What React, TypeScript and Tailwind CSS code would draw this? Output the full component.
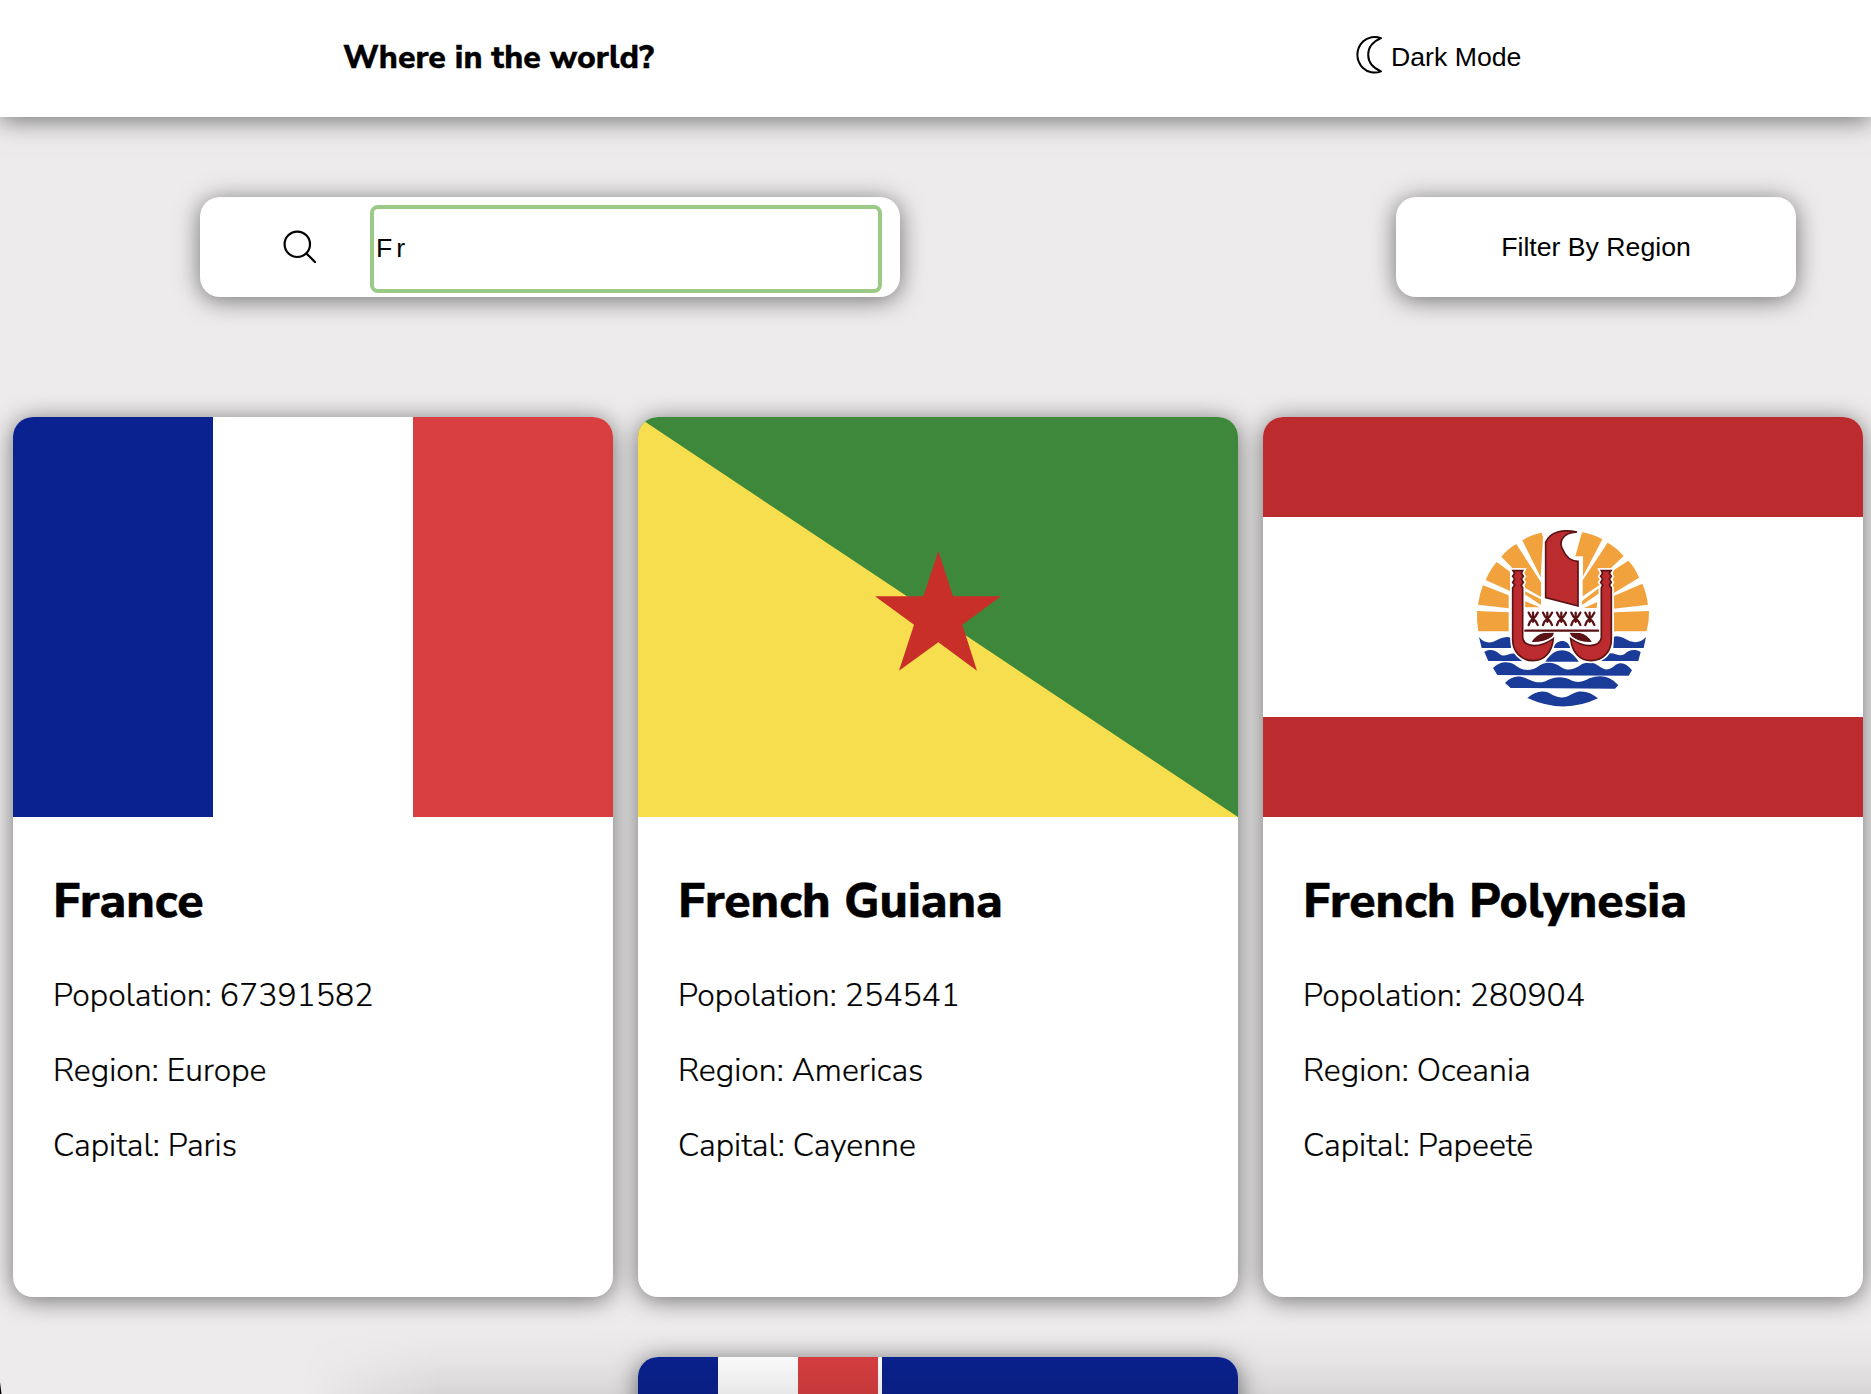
import React from "react";

const SHADOW = "shadow-[0_3px_24px_rgba(0,0,0,0.53)]";

function FranceFlag() {
  return (
    <svg viewBox="0 0 600 400" className="block h-[400px] w-[600px]">
      <rect width="200" height="400" fill="#0a2290" />
      <rect x="200" width="200" height="400" fill="#fff" />
      <rect x="400" width="200" height="400" fill="#d93f41" />
    </svg>
  );
}

function GuianaFlag() {
  return (
    <svg viewBox="0 0 600 400" className="block h-[400px] w-[600px]">
      <rect width="600" height="400" fill="#3d883a" />
      <path d="M0 0L600 400H0z" fill="#f6de4e" />
      <path
        transform="translate(222 123) scale(.33333)"
        d="M235 33L279 169H423L307 254L351 392L235 307L117 392L162 254L45 169H190z"
        fill="#c92f29"
      />
    </svg>
  );
}

const HOOK =
  "M159 167H188L184 175L190 184L184 192L190 202L184 210L188 219V368C190 384 205 391 222 392C246 392 262 384 280 371C276 410 255 437 219 437C184 437 158 410 158 374V219L164 210L158 202L164 192L158 184L164 175z";

function PolynesiaFlag() {
  return (
    <svg viewBox="0 0 600 400" className="block h-[400px] w-[600px]">
      <rect width="600" height="400" fill="#bc2c2f" />
      <rect y="100" width="600" height="200" fill="#fff" />
      <g transform="translate(197 98) scale(.33333)">
        <g fill="#f1a23c">
          <path d="M51 288L146 292V349H55Q50 320 51 288z" />
          <path d="M54 269Q58 237 69 211L146 241V280z" />
          <path d="M77 195Q90 164 110 141L150 170V228z" />
          <path d="M124 125Q144 101 169 87L243 202V246L194 218L190 160H158z" />
          <path d="M187 76Q215 58 245 53L249 67L242 187z" />
          <path d="M194 228L243 253V270L194 238zM194 258L240 277H194z" />
          <path d="M567 288L462 292V349H560Q568 320 567 288z" />
          <path d="M564 269Q559 232 547 206L461 243V281z" />
          <path d="M537 188Q526 159 505 137L458 167V236z" />
          <path d="M491 123Q470 98 443 83L368 196V244L419 210L421 160H452z" />
          <path d="M427 73Q396 56 366 52L346 124H369V184z" />
          <path d="M416 220L366 258V270L416 236zM412 261L372 279H410z" />
        </g>
        <g fill="#1b3b98">
          <path d="M57 366C70 382 85 385 100 380C120 371 134 362 153 368V399H65z" />
          <path d="M558 366C544 382 528 384 510 379C490 367 474 359 460 366V399H551z" />
          <path d="M279 399C290 371 324 371 331 399z" />
          <path d="M73 411C88 401 105 405 119 417C134 429 148 412 165 416L187 438H85z" />
          <path d="M542 411C524 401 507 405 494 417C478 428 462 410 445 416L422 438H535z" />
          <path d="M256 440C284 394 328 394 356 440z" />
          <path d="M99 459C118 440 144 436 168 452C190 467 208 470 231 457C256 437 281 440 306 458C330 471 350 459 365 448C386 439 400 441 421 456C440 470 455 461 466 450C485 439 500 447 516 466L506 482L112 480z" />
          <path d="M135 504C153 483 177 479 201 491C226 503 245 506 262 496C286 484 310 483 332 495C356 506 370 500 388 490C423 477 451 484 475 511L465 521L152 519z" />
          <path d="M202 549C226 528 254 523 278 540C302 552 318 548 338 536C365 523 391 532 414 550Q312 599 202 549z" />
        </g>
        <path d="M282 352L217 381C229 359 248 353 282 352zM329 352L395 381C384 359 362 353 329 352z" fill="#fff" stroke="#fff" strokeWidth="9" />
        <path d="M282 353L277 366Q252 382 215 381Q229 358 252 354zM329 353L336 366Q358 382 395 381Q382 358 359 354z" fill="#5a1215" />
        <path d={HOOK} fill="#fff" stroke="#fff" strokeWidth="15" />
        <path d={HOOK} fill="#bc2c2f" stroke="#5a1215" strokeWidth="5" />
        <g transform="matrix(-1 0 0 1 612 0)">
          <path d={HOOK} fill="#fff" stroke="#fff" strokeWidth="15" />
          <path d={HOOK} fill="#bc2c2f" stroke="#5a1215" strokeWidth="5" />
        </g>
        <path d="M351 51C305 54 295 82 309 105C318 127 333 138 354 139V273L257 248V82C270 50 308 42 351 51z" fill="#bc2c2f" stroke="#5a1215" strokeWidth="5" />
        <path d="M196 347H414" stroke="#5a1215" strokeWidth="7" strokeLinecap="round" />
        {[219, 262, 304, 347, 389].map((x) => (
          <path
            key={x}
            transform={`translate(${x} 311)`}
            d="M0 -18V0M-13 -18C-10 -10 -6 -4 0 0C6 -4 10 -10 14 -18M-13 19C-11 10 -7 5 0 0C7 5 11 10 14 19M-3 3L0 9L3 3"
            fill="none"
            stroke="#5a1215"
            strokeWidth="7"
            strokeLinecap="round"
            strokeLinejoin="round"
          />
        ))}
      </g>
    </svg>
  );
}

function SouthernLandsFlag() {
  return (
    <svg viewBox="0 0 600 400" className="block h-[400px] w-[600px]">
      <rect width="600" height="400" fill="#0a2290" />
      <rect x="80" width="164" height="164" fill="#fff" />
      <rect x="160" width="80" height="160" fill="#d93f41" />
    </svg>
  );
}

type CardProps = {
  flag: React.ReactNode;
  name: string;
  population: number;
  region: string;
  capital: string;
};

function Card({ flag, name, population, region, capital }: CardProps) {
  return (
    <article className={`h-[880px] w-[600px] shrink-0 overflow-hidden rounded-[20px] bg-white ${SHADOW}`}>
      {flag}
      <div className="px-10 pt-[49px] whitespace-nowrap">
        <h2 className="text-[48px] leading-[70px] font-extrabold [-webkit-text-stroke:0.4px_black]">{name}</h2>
        <div className="mt-[38px] flex flex-col gap-[31px] text-[32px] leading-[44px] font-light [-webkit-text-stroke:0.2px_black]">
          <p>Popolation: {population}</p>
          <p>Region: {region}</p>
          <p>Capital: {capital}</p>
        </div>
      </div>
    </article>
  );
}

export default function App() {
  return (
    <div className="relative h-[1394px] w-[1871px] overflow-hidden bg-[#edebec] font-['Nunito_Sans',Nunito,'Open_Sans',sans-serif] text-black">
      <header className={`flex h-[117px] items-center bg-white pl-[343px] ${SHADOW}`}>
        <h1 className="mt-[-2px] w-[1012px] text-[32px] leading-[44px] font-extrabold whitespace-nowrap [-webkit-text-stroke:0.3px_black]">
          Where in the world?
        </h1>
        <button className="flex items-center font-['Liberation_Sans',sans-serif] text-[26.667px] leading-8">
          <svg width="28" height="40" viewBox="0 0 28 40" fill="none" stroke="#000" strokeWidth="2" strokeLinejoin="round" className="mt-[-7px] mr-[8px]">
            <path d="M26 3.2C20 .6 12.5 2 8 6.5C.5 14 .5 25.500 8 33C12.500 37.500 20 38.800 26 36.300C19.500 33.500 13.200 28 13.200 19.700C13.200 11.500 19.500 6 26 3.200z" />
          </svg>
          <span className="mt-[-4px]">Dark Mode</span>
        </button>
      </header>

      <div className="flex justify-between pt-20 pr-[75px] pl-[200px] font-['Liberation_Sans',sans-serif] text-[26.667px]">
        <div className={`flex h-[100px] w-[700px] items-center rounded-[20px] bg-white ${SHADOW}`}>
          <svg width="34" height="34" viewBox="0 0 34 34" fill="none" stroke="#000" strokeWidth="2.200" strokeLinecap="round" className="ml-[83px]">
            <circle cx="14.300" cy="14.300" r="12.700" />
            <path d="M23.500 23.500L32 32" />
          </svg>
          <input
            defaultValue="Fr"
            className="mt-[4px] ml-[53px] h-[88px] w-[512px] rounded-lg border-4 border-[#9bc986] pb-[1px] pl-[2px] tracking-[4px] outline-none"
          />
        </div>
        <button className={`h-[100px] w-[400px] rounded-[20px] bg-white ${SHADOW}`}>Filter By Region</button>
      </div>

      <main className="mt-[120px] flex w-[1871px] flex-wrap justify-center gap-x-[25px] gap-y-[60px] pl-[5px]">
        <Card flag={<FranceFlag />} name="France" population={67391582} region="Europe" capital="Paris" />
        <Card flag={<GuianaFlag />} name="French Guiana" population={254541} region="Americas" capital="Cayenne" />
        <Card flag={<PolynesiaFlag />} name="French Polynesia" population={280904} region="Oceania" capital="Papeetē" />
        <div className={`h-[880px] w-[600px] overflow-hidden rounded-[20px] bg-white ${SHADOW}`}>
          <SouthernLandsFlag />
        </div>
      </main>

      <div className="pointer-events-none absolute inset-x-0 bottom-0 h-[64px] bg-linear-to-t from-black/9 via-black/3 to-transparent [mask-image:linear-gradient(to_right,transparent_300px,black_440px)]" />
      <svg width="2" height="12" className="absolute bottom-0 left-0">
        <path d="M0 0L1.500 12H0z" />
      </svg>
    </div>
  );
}
